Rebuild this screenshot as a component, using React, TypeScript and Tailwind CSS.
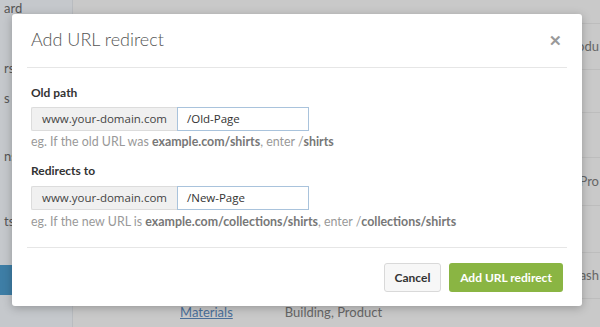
import React from 'react';

const rows = [
  { h: 'h-[46px]', right: 'odu' },
  { h: 'h-[43px]', right: '' },
  { h: 'h-[45px]', right: '' },
  { h: 'h-[48px]', right: 'Pro' },
  { h: 'h-[47px]', right: '' },
  { h: 'h-[46px]', right: 'ash' },
];

const UrlField: React.FC<{ value: string }> = ({ value }) => (
  <div className="flex h-[24px] text-[11.5px] text-[#444]" style={{ fontFamily: '"Open Sans", sans-serif' }}>
    <div className="w-[146px] flex items-center justify-center bg-[#f0f0f0] border border-[#dcdcdc] border-r-0 rounded-l-[2px]">
      www.your-domain.com
    </div>
    <div className="w-[132px] flex items-center px-[9px] bg-white border border-[#a9c3dc] text-[#333]">
      {value}
    </div>
  </div>
);

export default function App() {
  return (
    <div className="relative w-[600px] h-[327px] overflow-hidden bg-[#c9c9c9] text-[#666]" style={{ fontFamily: 'Lato, "Open Sans", sans-serif' }}>
      <div className="flex h-full">
        {/* sidebar */}
        <div className="w-[73px] shrink-0 bg-[#c5c8cc] border-r border-[#b9bcc0] flex flex-col text-[13px] text-[#555]">
          <div className="h-[16px] leading-[16px] pl-[4px]">ard</div>
          <div className="h-[38px]" />
          <div className="h-[30px] pl-[4px] flex items-center">rs</div>
          <div className="h-[30px] pl-[4px] flex items-center">s</div>
          <div className="h-[28px]" />
          <div className="h-[30px] pl-[4px] flex items-center">ns</div>
          <div className="h-[35px]" />
          <div className="h-[30px] pl-[4px] flex items-center">ts</div>
          <div className="h-[28px]" />
          <div className="h-[30px] bg-[#3e7ea6]" />
        </div>
        {/* main table */}
        <div className="flex-1 flex flex-col text-[13px] text-[#666]">
          <div className="h-[24px] shrink-0 border-b border-[#bdbdbd]" />
          {rows.map((r, i) => (
            <div key={i} className={`${r.h} shrink-0 border-b border-[#bdbdbd] flex items-center justify-end pr-[1px]`}>
              {r.right}
            </div>
          ))}
          <div className="flex items-center h-[30px] text-[13px]">
            <span className="ml-[107px] text-[#4a6f9a] underline">Materials</span>
            <span className="ml-[52px] text-[#666]">Building, Product</span>
          </div>
        </div>
      </div>

      {/* modal */}
      <div className="absolute left-[12px] top-[14px] w-[570px] h-[292px] bg-white rounded-[3px] shadow-[0_2px_10px_rgba(0,0,0,0.25)] flex flex-col">
        <div className="mx-[15px] h-[54px] border-b border-[#e6e6e6] flex items-center justify-between pl-[4px] pr-[5px]">
          <span className="text-[18px] font-light text-[#555] mt-[-2px]">Add URL redirect</span>
          <span className="text-[15px] font-bold text-[#999] leading-none">&#x2715;</span>
        </div>
        <div className="px-[19px] pt-[17px] flex flex-col">
          <div className="h-[16px] leading-[16px] text-[12px] font-bold text-[#333]">Old path</div>
          <div className="mt-[6px]"><UrlField value="/Old-Page" /></div>
          <div className="mt-[4px] h-[14px] leading-[14px] text-[12.4px] text-[#999] whitespace-nowrap">
            eg. If the old URL was <b className="text-[#777]">example.com/shirts</b>, enter /<b className="text-[#777]">shirts</b>
          </div>
          <div className="mt-[14px] h-[16px] leading-[16px] text-[12px] font-bold text-[#333]">Redirects to</div>
          <div className="mt-[7px]"><UrlField value="/New-Page" /></div>
          <div className="mt-[5px] h-[14px] leading-[14px] text-[12.4px] text-[#999] whitespace-nowrap">
            eg. If the new URL is <b className="text-[#777]">example.com/collections/shirts</b>, enter /<b className="text-[#777]">collections/shirts</b>
          </div>
        </div>
        <div className="mx-[15px] mt-[18px] border-b border-[#e6e6e6]" />
        <div className="flex justify-end gap-[8px] pr-[19px] pt-[15px]">
          <button className="h-[29px] w-[57px] bg-[#f7f7f7] border border-[#d9d9d9] rounded-[3px] text-[12px] font-bold text-[#333]">Cancel</button>
          <button className="h-[29px] w-[114px] bg-[#8ab543] rounded-[3px] text-[12px] font-bold text-white">Add URL redirect</button>
        </div>
      </div>
    </div>
  );
}
